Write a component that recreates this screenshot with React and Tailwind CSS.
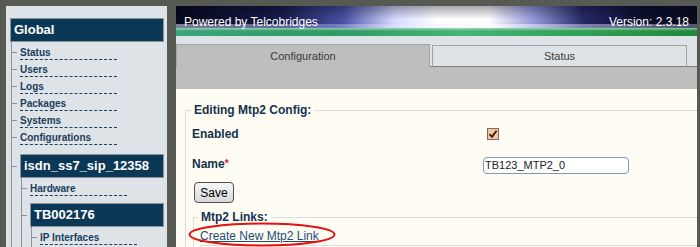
import React from 'react'

function Head({ children, className = '' }) {
  return (
    <div className={`h-[24px] bg-[#0c3857] border border-[#8a969c] text-white font-bold text-[13px] leading-[22px] pl-[3px] whitespace-nowrap ${className}`}>
      {children}
    </div>
  )
}

function Item({ label }) {
  return (
    <div className="flex items-start h-[17px]">
      <span className="mt-[10px] w-[5px] h-px bg-[#8c9296] shrink-0" />
      <span className="ml-[3px] w-[97px] pt-[5px] border-b border-dashed border-[#1b3d5e] text-[10px] leading-[12px] font-bold text-[#1b3d5e] whitespace-nowrap">
        {label}
      </span>
    </div>
  )
}

function Banner() {
  return (
    <div className="relative h-[30px] shrink-0 overflow-hidden">
      <svg className="absolute inset-0" width="521" height="30" viewBox="0 0 521 30" preserveAspectRatio="none">
        <defs>
          <linearGradient id="sky" x1="0" x2="1" y1="0" y2="0">
            <stop offset="0" stopColor="#07081c" />
            <stop offset="0.2" stopColor="#161a48" />
            <stop offset="0.32" stopColor="#4a50a4" />
            <stop offset="0.42" stopColor="#d6dbff" />
            <stop offset="0.5" stopColor="#ffffff" />
            <stop offset="0.6" stopColor="#ffffff" />
            <stop offset="0.68" stopColor="#9aa0e0" />
            <stop offset="0.78" stopColor="#262a66" />
            <stop offset="0.88" stopColor="#0e1030" />
            <stop offset="1" stopColor="#080a1e" />
          </linearGradient>
          <linearGradient id="shade" x1="0" x2="0" y1="0" y2="1">
            <stop offset="0" stopColor="#05061a" stopOpacity="0.35" />
            <stop offset="0.45" stopColor="#05061a" stopOpacity="0" />
          </linearGradient>
          <linearGradient id="streak" x1="0" x2="1" y1="0" y2="0">
            <stop offset="0" stopColor="#dfe6ff" stopOpacity="0.9" />
            <stop offset="0.3" stopColor="#c8d0ff" stopOpacity="0.6" />
            <stop offset="0.6" stopColor="#ffffff" stopOpacity="0.9" />
            <stop offset="1" stopColor="#b8bde8" stopOpacity="0.7" />
          </linearGradient>
          <linearGradient id="green" x1="0" x2="1" y1="0" y2="0">
            <stop offset="0" stopColor="#3aa57a" />
            <stop offset="0.3" stopColor="#2f9a62" />
            <stop offset="0.55" stopColor="#45b576" />
            <stop offset="1" stopColor="#1d8a3a" />
          </linearGradient>
          <linearGradient id="greenTop" x1="0" x2="0" y1="0" y2="1">
            <stop offset="0" stopColor="#ffffff" stopOpacity="0.5" />
            <stop offset="1" stopColor="#ffffff" stopOpacity="0" />
          </linearGradient>
        </defs>
        <rect x="0" y="0" width="521" height="30" fill="url(#sky)" />
        <rect x="0" y="0" width="521" height="30" fill="url(#shade)" />
        <rect x="0" y="18" width="521" height="4" fill="url(#streak)" opacity="0.6" />
        <rect x="0" y="22" width="521" height="8" fill="url(#green)" />
        <rect x="0" y="22" width="521" height="3" fill="url(#greenTop)" />
      </svg>
      <div className="relative flex items-center justify-between h-full pl-[8px] pr-[8px] pt-[2px] text-white text-[12px]">
        <span>Powered by Telcobridges</span>
        <span>Version: 2.3.18</span>
      </div>
    </div>
  )
}

export default function App() {
  return (
    <div className="w-[700px] h-[247px] overflow-hidden bg-[#575a53] flex pt-[6px] pl-[6px] font-['Liberation_Sans',Arial,sans-serif]">
      {/* menu */}
      <div className="w-[161px] shrink-0 bg-[#dde3e6] pl-[4px] pt-[12px] overflow-hidden">
        <Head className="w-[154px]">Global</Head>
        <div className="ml-px border-l border-[#8c9296]">
          <Item label="Status" />
          <Item label="Users" />
          <Item label="Logs" />
          <Item label="Packages" />
          <Item label="Systems" />
          <Item label="Configurations" />
          <div className="mt-[10px] flex items-center">
            <span className="w-[5px] h-px bg-[#8c9296] shrink-0" />
            <Head className="ml-[3px] w-[144px]">isdn_ss7_sip_12358</Head>
          </div>
          <div className="ml-[9px] border-l border-[#8c9296]">
            <Item label="Hardware" />
            <div className="mt-[8px] flex items-center">
              <span className="w-[5px] h-px bg-[#8c9296] shrink-0" />
              <Head className="ml-[3px] w-[134px]">TB002176</Head>
            </div>
            <div className="ml-[9px] border-l border-[#8c9296] pb-[30px]">
              <Item label="IP Interfaces" />
            </div>
          </div>
        </div>
      </div>

      {/* main */}
      <div className="ml-[9px] w-[521px] shrink-0 flex flex-col bg-[#dde3e6]">
        <Banner />
        <div className="h-[8px] shrink-0" />
        <div className="flex h-[23px] shrink-0 text-[11px] text-[#3b3b3b]">
          <div className="w-[254px] bg-[#bebebe] border-t border-l border-r border-[#a3a3a3] flex items-center justify-center">
            Configuration
          </div>
          <div className="w-[2px] border-b border-[#7d7d7d]" />
          <div className="w-[255px] mt-px border border-[#a3a3a3] border-b-[#7d7d7d] flex items-center justify-center">
            Status
          </div>
          <div className="flex-1 border-b border-[#7d7d7d]" />
        </div>
        <div className="h-[22px] shrink-0 bg-[#bebebe]" />

        <div className="flex-1 bg-[#fffcf3] overflow-hidden">
          <fieldset className="mt-[14px] ml-[9px] w-[530px] border border-[#dcdcdc]">
            <legend className="ml-[5px] px-[3px] text-[12px] leading-[14px] font-bold text-[#13334f]">
              Editing Mtp2 Config:
            </legend>
            <div className="pl-[6px] mt-[2px] grid grid-cols-[291px_1fr] text-[12px] font-bold text-[#13334f]">
              <div className="h-[30px] flex items-center">Enabled</div>
              <div className="h-[30px] flex items-center pl-[4px]">
                <span className="w-[12px] h-[12px] border border-[#6e6e6e] bg-[#f6c59c] flex items-center justify-center">
                  <svg width="10" height="10" viewBox="0 0 10 10">
                    <path d="M1.5 5.2 L4 7.8 L8.6 1.8" fill="none" stroke="#3b1a08" strokeWidth="1.8" />
                  </svg>
                </span>
              </div>
              <div className="h-[30px] flex items-center">
                Name<span className="text-[#e11] text-[10px] self-start mt-[7px]">*</span>
              </div>
              <div className="h-[30px] flex items-center">
                <input
                  readOnly
                  value="TB123_MTP2_0"
                  className="w-[146px] h-[17px] mt-[2px] border border-[#7f9bb8] rounded-[4px] bg-white pl-[1px] text-[11px] font-normal text-[#222] outline-none"
                />
              </div>
            </div>
            <div className="flex pl-[8px] mt-[3px]">
              <button className="w-[40px] h-[21px] rounded-[4px] border border-[#4e4e4e] bg-gradient-to-b from-[#f7f7f7] to-[#d9d9d9] text-[12px] leading-[14px] text-black">
                Save
              </button>
            </div>
            <fieldset className="mt-[7px] ml-[7px] border border-[#dcdcdc]">
              <legend className="ml-[4px] px-[3px] text-[12px] leading-[14px] font-bold text-[#13334f]">
                Mtp2 Links:
              </legend>
              <div className="flex pl-[6px] pt-[5px] text-[12px] leading-[14px]">
                <a className="relative block text-[#1d4c78] underline">
                  Create New Mtp2 Link
                  <svg className="absolute left-[-12px] top-[-7px]" width="148" height="25" viewBox="0 0 148 25">
                    <ellipse cx="74" cy="12.5" rx="72.5" ry="11" fill="none" stroke="#e31212" strokeWidth="2" />
                  </svg>
                </a>
              </div>
              <div className="ml-[6px] mt-[2px] border-t border-[#dcdcdc] h-[20px]" />
            </fieldset>
          </fieldset>
        </div>
      </div>
    </div>
  )
}
